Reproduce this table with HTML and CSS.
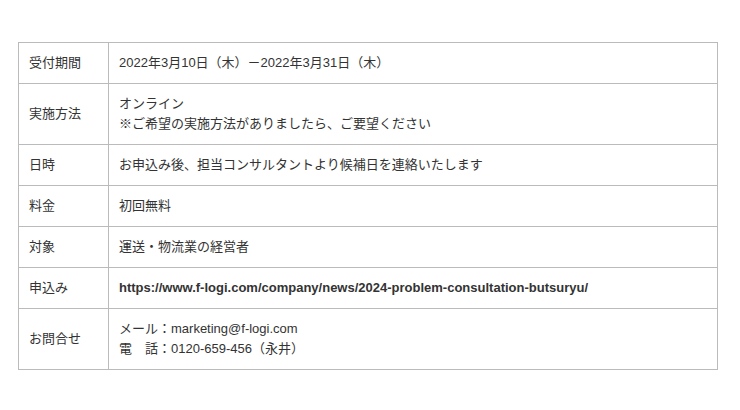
FILE: index.html
```html
<!DOCTYPE html>
<html lang="ja">
<head>
    <meta charset="UTF-8">
    <title>お問合せ概要</title>
    <link rel="stylesheet" href="styles.css">
</head>
<body>

<div class="container">
    <table class="info-table">
        <colgroup>
            <col class="label-col">
            <col>
        </colgroup>
        <tr>
            <th>受付期間</th>
            <td>2022年3月10日（木）－2022年3月31日（木）</td>
        </tr>
        <tr>
            <th>実施方法</th>
            <td>オンライン<br>※ご希望の実施方法がありましたら、ご要望ください</td>
        </tr>
        <tr>
            <th>日時</th>
            <td>お申込み後、担当コンサルタントより候補日を連絡いたします</td>
        </tr>
        <tr>
            <th>料金</th>
            <td>初回無料</td>
        </tr>
        <tr>
            <th>対象</th>
            <td>運送・物流業の経営者</td>
        </tr>
        <tr>
            <th>申込み</th>
            <td><b>https://www.f-logi.com/company/news/2024-problem-consultation-butsuryu/</b></td>
        </tr>
        <tr>
            <th>お問合せ</th>
            <td>メール：marketing@f-logi.com<br>電　話：0120-659-456（永井）</td>
        </tr>
    </table>
</div>

</body>
</html>
```

FILE: styles.css
```css
body {
    margin: 0;
    background-color: #fff;
    font-family: "Liberation Sans", "Noto Sans CJK JP", sans-serif;
    font-size: 13px;
    color: #333;
}

.container {
    padding: 42px 0 0 18px;
}

.info-table {
    width: 700px;
    border-collapse: collapse;
    table-layout: fixed;
}

.label-col {
    width: 90px;
}

.info-table th,
.info-table td {
    border: 1px solid #bbb;
    padding: 10px;
    line-height: 20px;
    text-align: left;
    vertical-align: middle;
    font-weight: normal;
}

.info-table td b {
    font-weight: bold;
}
```
